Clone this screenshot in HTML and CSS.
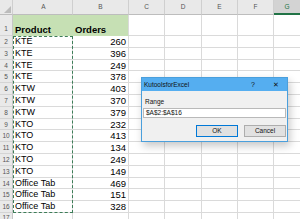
FILE: index.html
```html
<!DOCTYPE html>
<html>
<head>
<meta charset="utf-8">
<link rel="stylesheet" href="styles.css">
</head>
<body>
<div class="sheet">
  <div class="row colhead">
    <div class="c rn corner"><span class="tri"></span></div>
    <div class="c a">A</div><div class="c b">B</div><div class="c cc">C</div><div class="c d">D</div><div class="c e">E</div><div class="c f">F</div><div class="c g active">G</div>
  </div>
  <div class="row r1">
    <div class="c rn">1</div>
    <div class="c a hdr">Product</div><div class="c b hdr">Orders</div><div class="c cc"></div><div class="c d"></div><div class="c e"></div><div class="c f"></div><div class="c g"></div>
  </div>
  <div class="row"><div class="c rn">2</div><div class="c a">KTE</div><div class="c b num">260</div><div class="c cc"></div><div class="c d"></div><div class="c e"></div><div class="c f"></div><div class="c g"></div></div>
  <div class="row"><div class="c rn">3</div><div class="c a">KTE</div><div class="c b num">396</div><div class="c cc"></div><div class="c d"></div><div class="c e"></div><div class="c f"></div><div class="c g"></div></div>
  <div class="row"><div class="c rn">4</div><div class="c a">KTE</div><div class="c b num">249</div><div class="c cc"></div><div class="c d"></div><div class="c e"></div><div class="c f"></div><div class="c g"></div></div>
  <div class="row"><div class="c rn">5</div><div class="c a">KTE</div><div class="c b num">378</div><div class="c cc"></div><div class="c d"></div><div class="c e"></div><div class="c f"></div><div class="c g"></div></div>
  <div class="row"><div class="c rn">6</div><div class="c a">KTW</div><div class="c b num">403</div><div class="c cc"></div><div class="c d"></div><div class="c e"></div><div class="c f"></div><div class="c g"></div></div>
  <div class="row"><div class="c rn">7</div><div class="c a">KTW</div><div class="c b num">370</div><div class="c cc"></div><div class="c d"></div><div class="c e"></div><div class="c f"></div><div class="c g"></div></div>
  <div class="row"><div class="c rn">8</div><div class="c a">KTW</div><div class="c b num">379</div><div class="c cc"></div><div class="c d"></div><div class="c e"></div><div class="c f"></div><div class="c g"></div></div>
  <div class="row"><div class="c rn">9</div><div class="c a">KTO</div><div class="c b num">232</div><div class="c cc"></div><div class="c d"></div><div class="c e"></div><div class="c f"></div><div class="c g"></div></div>
  <div class="row"><div class="c rn">10</div><div class="c a">KTO</div><div class="c b num">413</div><div class="c cc"></div><div class="c d"></div><div class="c e"></div><div class="c f"></div><div class="c g"></div></div>
  <div class="row"><div class="c rn">11</div><div class="c a">KTO</div><div class="c b num">134</div><div class="c cc"></div><div class="c d"></div><div class="c e"></div><div class="c f"></div><div class="c g"></div></div>
  <div class="row"><div class="c rn">12</div><div class="c a">KTO</div><div class="c b num">249</div><div class="c cc"></div><div class="c d"></div><div class="c e"></div><div class="c f"></div><div class="c g"></div></div>
  <div class="row"><div class="c rn">13</div><div class="c a">KTO</div><div class="c b num">149</div><div class="c cc"></div><div class="c d"></div><div class="c e"></div><div class="c f"></div><div class="c g"></div></div>
  <div class="row"><div class="c rn">14</div><div class="c a">Office Tab</div><div class="c b num">469</div><div class="c cc"></div><div class="c d"></div><div class="c e"></div><div class="c f"></div><div class="c g"></div></div>
  <div class="row"><div class="c rn">15</div><div class="c a">Office Tab</div><div class="c b num">151</div><div class="c cc"></div><div class="c d"></div><div class="c e"></div><div class="c f"></div><div class="c g"></div></div>
  <div class="row"><div class="c rn">16</div><div class="c a">Office Tab</div><div class="c b num">328</div><div class="c cc"></div><div class="c d"></div><div class="c e"></div><div class="c f"></div><div class="c g"></div></div>
  <div class="row last"><div class="c rn">17</div><div class="c a"></div><div class="c b"></div><div class="c cc"></div><div class="c d"></div><div class="c e"></div><div class="c f"></div><div class="c g"></div></div>
  <div class="ants"></div>
  <div class="dialog">
    <div class="titlebar">
      <span class="title">KutoolsforExcel</span>
      <span class="tbtn q">?</span>
      <span class="tbtn x">&#x2715;</span>
    </div>
    <div class="dbody">
      <div class="label">Range</div>
      <div class="input">$A$2:$A$16</div>
      <div class="buttons">
        <div class="btn ok">OK</div>
        <div class="btn">Cancel</div>
      </div>
    </div>
  </div>
</div>
</body>
</html>
```

FILE: styles.css
```css
html, body {
  margin: 0;
  padding: 0;
  background: #ffffff;
}
.sheet {
  position: relative;
  width: 300px;
  height: 219px;
  overflow: hidden;
  font-family: "Liberation Sans", Arial, sans-serif;
  color: #000;
}
.row {
  display: flex;
  height: 11.8px;
}
.row.colhead { height: 15px; }
.row.r1 { height: 21px; }
.row.last { height: 8px; }
.c {
  box-sizing: border-box;
  flex: none;
  border-right: 1px solid #dadada;
  border-bottom: 1px solid #dadada;
  font-size: 9px;
  line-height: 11px;
  white-space: nowrap;
  overflow: hidden;
}
.rn { width: 13px; background: #e9e9e9; color: #555; font-size: 6.5px; text-align: center; border-right-color: #c6c6c6; border-bottom-color: #d4d4d4; line-height: 11px; }
.last .rn { line-height: 9px; }
.a { width: 60px; padding-left: 2px; }
.b { width: 56px; }
.cc { width: 36px; }
.d { width: 37px; }
.e { width: 36px; }
.f { width: 36px; }
.g { width: 26px; border-right: none; }
.num { text-align: right; padding-right: 2px; font-size: 9.5px; }
.colhead .c {
  background: #e9e9e9;
  color: #555;
  font-size: 6.5px;
  text-align: center;
  line-height: 14px;
  border-right-color: #cfcfcf;
  border-bottom-color: #bdbdbd;
}
.colhead .corner { position: relative; }
.tri {
  position: absolute;
  right: 1px;
  bottom: 1px;
  width: 0;
  height: 0;
  border-left: 7px solid transparent;
  border-bottom: 7px solid #bcbcbc;
}
.colhead .active {
  background: #d3d3d3;
  color: #217346;
  border-bottom: 2px solid #217346;
}
.r1 .rn { line-height: 28px; }
.r1 .hdr {
  background: #c6e0b4;
  font-weight: bold;
  font-size: 9.5px;
  line-height: 30px;
  border-right-color: #c6e0b4;
  border-bottom-color: #c6e0b4;
}
.r1 .b.hdr { padding-left: 2px; border-right-color: #dadada; }
.ants {
  position: absolute;
  left: 13px;
  top: 35.5px;
  width: 60px;
  height: 177.5px;
  box-sizing: border-box;
  border: 1.5px dashed #3d7d58;
}
.dialog {
  position: absolute;
  left: 141px;
  top: 77px;
  width: 147px;
  height: 65px;
  box-sizing: border-box;
  border: 1px solid #4a9fdc;
  background: #f0f0f0;
  box-shadow: 2px 4px 8px rgba(0, 0, 0, 0.22);
  display: flex;
  flex-direction: column;
}
.titlebar {
  height: 13px;
  background: #55aef0;
  display: flex;
  align-items: center;
  padding-left: 2px;
  font-size: 6.5px;
  color: #111;
}
.title { flex: 1; }
.tbtn { font-size: 7px; text-align: center; }
.q { width: 10px; margin-right: 13px; }
.x { width: 10px; margin-right: 6px; font-size: 7px; }
.dbody {
  padding: 6px 1px 0 1px;
  display: flex;
  flex-direction: column;
}
.label {
  font-size: 6.5px;
  line-height: 9px;
  margin-bottom: 2px;
  padding-left: 2px;
  color: #111;
}
.input {
  height: 10px;
  box-sizing: border-box;
  background: #fff;
  border: 1px solid #b9b9b9;
  font-size: 6.5px;
  line-height: 8px;
  padding-left: 2px;
  color: #111;
}
.buttons {
  margin-top: 7px;
  display: flex;
  justify-content: flex-end;
  gap: 6px;
}
.btn {
  width: 42px;
  height: 12px;
  box-sizing: border-box;
  background: #e1e1e1;
  border: 1px solid #adadad;
  font-size: 6.5px;
  line-height: 10px;
  text-align: center;
  color: #111;
}
.btn.ok { border-color: #0078d7; }
```
